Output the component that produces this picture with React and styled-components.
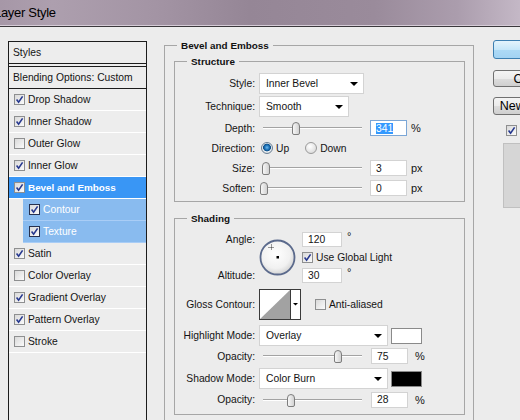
import React from "react";
import styled, { createGlobalStyle } from "styled-components";

const GlobalStyle = createGlobalStyle`
  html, body {
    margin: 0;
    padding: 0;
    background: #ececec;
  }
  body {
    font-family: "Liberation Sans", Arial, sans-serif;
    font-size: 10.3px;
    color: #141414;
  }
  * {
    box-sizing: border-box;
  }
`;

const Window = styled.div`
  width: 520px;
  height: 420px;
  overflow: hidden;
  background: #ececec;
  display: flex;
  flex-direction: column;
`;

const TitleBar = styled.div`
  height: 27px;
  flex-shrink: 0;
  display: flex;
  align-items: center;
  padding-bottom: 2px;
  background: linear-gradient(
    90deg,
    #a697a7 0%,
    #ad9fae 10%,
    #a394a4 30%,
    #958696 48%,
    #9a8b9b 72%,
    #ab9dad 88%,
    #c4b8c6 100%
  );
  border-bottom: 1px solid #3b383c;
  box-shadow: inset 0 -1px 0 #d6ccd7;
`;

const Title = styled.span`
  font-size: 13px;
  letter-spacing: -0.3px;
  margin-left: -6px;
  color: #000;
`;

const Body = styled.div`
  display: flex;
  height: 393px;
  align-items: flex-start;
  overflow: hidden;
`;

/* ---------- left list of styles ---------- */

const StylesPanel = styled.div`
  flex-shrink: 0;
  align-self: stretch;
  width: 139px;
  margin: 14px 0 0 8px;
  border: 1px solid #1c1c1c;
  border-bottom: none;
  background: #ededed;
`;

const PanelHeader = styled.div`
  height: ${({ $double }) => ($double ? 25 : 22)}px;
  padding-left: 4px;
  display: flex;
  align-items: center;
  border-bottom: ${({ $double }) => ($double ? "4px double #1c1c1c" : "1px solid #1c1c1c")};
`;

const PanelItem = styled.div`
  height: 22px;
  display: flex;
  align-items: center;
  gap: 3px;
  margin-left: ${({ $sub }) => ($sub ? 14 : 0)}px;
  padding-left: ${({ $sub }) => ($sub ? 6 : 5)}px;
  border-bottom: 1px solid ${({ $sub }) => ($sub ? "#a9cdf6" : "#ffffff")};
  background: ${({ $sel, $sub }) => ($sel ? "#3996f5" : $sub ? "#89bbef" : "transparent")};
  color: ${({ $sel, $sub }) => ($sel || $sub ? "#fff" : "#141414")};
  font-weight: ${({ $sel }) => ($sel ? "bold" : "normal")};
  font-size: ${({ $sel }) => ($sel ? "9.9px" : "10.3px")};
`;

const Box = styled.span`
  width: 11px;
  height: 11px;
  flex-shrink: 0;
  border: 1px solid ${({ $dark }) => ($dark ? "#27314f" : "#8e8f90")};
  background: linear-gradient(135deg, #d9d9d9, #fbfbfb);
  display: inline-flex;
  align-items: center;
  justify-content: center;
  margin-left: ${({ $ml }) => $ml || 0}px;
`;

const CheckBox = ({ on, dark, ml }) => (
  <Box $dark={dark} $ml={ml}>
    {on && (
      <svg width="9" height="9" viewBox="0 0 9 9">
        <path d="M1.6 4.6 L3.6 7.2 L7.6 1.4" fill="none" stroke="#26388f" strokeWidth="1.6" />
      </svg>
    )}
  </Box>
);

/* ---------- centre settings ---------- */

const Group = styled.fieldset`
  flex-shrink: 0;
  width: 310px;
  margin: 12px 0 0 17px;
  padding: 3px 8px 40px 9px;
  border: 1px solid #a6a6a6;
  min-width: 0;
`;

const SubGroup = styled.fieldset`
  width: 291px;
  margin: ${({ $mt }) => $mt || 0}px 0 0 0;
  padding: ${({ $pt }) => $pt}px 0 4px 0;
  border: 1px solid #a6a6a6;
  min-width: 0;
`;

const Legend = styled.legend`
  font-weight: bold;
  font-size: 9.9px;
  line-height: 13px;
  padding: 0 4px;
  margin-left: ${({ $ml }) => $ml}px;
  color: #111;
`;

const Row = styled.div`
  display: flex;
  align-items: center;
  height: ${({ $h }) => $h}px;
  margin-top: ${({ $mt }) => $mt || 0}px;
`;

const Label = styled.span`
  width: 84px;
  padding-right: 4px;
  text-align: right;
  flex-shrink: 0;
`;

const Select = styled.div`
  width: ${({ $w }) => $w}px;
  height: 21px;
  flex-shrink: 0;
  background: #fff;
  border: 1px solid #d3d3d3;
  display: flex;
  align-items: center;
  justify-content: space-between;
  padding: 0 5px 0 6px;
`;

const Caret = ({ w = 8 }) => (
  <svg width={w} height={w / 2} viewBox={`0 0 ${w} ${w / 2}`}>
    <path d={`M0 0 H${w} L${w / 2} ${w / 2} Z`} fill="#000" />
  </svg>
);

const Slider = styled.div`
  position: relative;
  width: 99px;
  height: 14px;
  margin-left: 4px;
  flex-shrink: 0;
  display: flex;
  align-items: center;
`;

const Track = styled.div`
  width: 100%;
  height: 2px;
  border-top: 1px solid #a3a3a3;
  border-bottom: 1px solid #fff;
`;

const Thumb = styled.span`
  position: absolute;
  top: 1px;
  left: ${({ $at }) => $at}px;
  width: 8px;
  height: 13px;
  border: 1px solid #7d7d7d;
  border-radius: 4px 4px 2px 2px;
  background: linear-gradient(90deg, #f7f7f7, #d2d2d2);
`;

const NumBox = styled.div`
  width: ${({ $w }) => $w || 37}px;
  height: ${({ $h }) => $h || 16}px;
  margin-left: ${({ $ml }) => ($ml === undefined ? 8 : $ml)}px;
  flex-shrink: 0;
  background: #fff;
  border: 1px solid ${({ $focus }) => ($focus ? "#7ba6d6" : "#d3d3d3")};
  padding-left: 5px;
  display: flex;
  align-items: center;
`;

const Selected = styled.span`
  background: #3399ff;
  color: #fff;
`;

const Unit = styled.span`
  margin-left: ${({ $ml }) => $ml || 4}px;
  font-size: 11px;
`;

const Degree = styled.span`
  margin-left: 5px;
  align-self: flex-start;
  line-height: 9px;
  font-size: 11px;
`;

const Radio = styled.span`
  width: 12px;
  height: 12px;
  flex-shrink: 0;
  border-radius: 50%;
  margin-left: ${({ $ml }) => $ml}px;
  border: 1px solid ${({ $on }) => ($on ? "#6b7f93" : "#9a9a9a")};
  background: ${({ $on }) =>
    $on
      ? "radial-gradient(circle at 50% 45%, #6dbbf0 0, #1b6fb5 2.4px, #0d4e86 3.6px, #eef2f5 4.2px, #cdd4da 6px)"
      : "radial-gradient(circle at 40% 35%, #ffffff, #d2d2d2)"};
`;

const Text = styled.span`
  margin-left: ${({ $ml }) => $ml || 3}px;
  white-space: nowrap;
`;

const AngleGrid = styled.div`
  display: grid;
  grid-template-columns: 84px 43px auto;
  grid-template-rows: 15px 21px 15px;
  align-items: center;
`;

const Dial = styled.svg`
  grid-column: 2;
  grid-row: 1 / span 3;
  align-self: center;
`;

const Cell = styled.div`
  grid-column: ${({ $col }) => $col};
  grid-row: ${({ $row }) => $row};
  display: flex;
  align-items: center;
  height: 100%;
`;

const ContourBox = styled.div`
  width: 42px;
  height: 31px;
  flex-shrink: 0;
  display: flex;
  background: #fff;
  border: 1px solid #3a3a3a;
`;

const ContourDrop = styled.div`
  flex: 1;
  border-left: 1px solid #3a3a3a;
  display: flex;
  align-items: center;
  justify-content: center;
`;

const Swatch = styled.div`
  width: 31px;
  height: 16px;
  margin-left: 3px;
  flex-shrink: 0;
  background: ${({ $color }) => $color};
  border: 1px solid #8a8a8a;
`;

/* ---------- right column ---------- */

const Side = styled.div`
  flex-shrink: 0;
  width: 80px;
  margin-left: 19px;
  display: flex;
  flex-direction: column;
`;

const SideButton = styled.div`
  height: ${({ $h }) => $h}px;
  margin-top: ${({ $mt }) => $mt}px;
  border-radius: 3px;
  border: 1px solid ${({ $primary }) => ($primary ? "#3c7fb1" : "#707070")};
  background: ${({ $primary }) =>
    $primary
      ? "linear-gradient(#e4f4fc, #c6e7f9 50%, #addaf6 51%, #a2d3f3)"
      : "linear-gradient(#f4f4f4, #ebebeb 50%, #dddddd 51%, #cfcfcf)"};
  font-size: 12.5px;
  color: #000;
  display: flex;
  align-items: center;
  justify-content: center;
  white-space: nowrap;
`;

const PreviewRow = styled.div`
  display: flex;
  align-items: center;
  margin-top: 10px;
  height: 11px;
`;

const PreviewBox = styled.div`
  height: 65px;
  margin: 7px 0 0 10px;
  background: #d6d6d6;
  border: 1px solid #c0c0c0;
`;

const items = [
  { name: "Drop Shadow", on: true },
  { name: "Inner Shadow", on: true },
  { name: "Outer Glow", on: false },
  { name: "Inner Glow", on: true },
  { name: "Bevel and Emboss", on: true, sel: true },
  { name: "Contour", on: true, sub: true },
  { name: "Texture", on: true, sub: true },
  { name: "Satin", on: true },
  { name: "Color Overlay", on: false },
  { name: "Gradient Overlay", on: true },
  { name: "Pattern Overlay", on: true },
  { name: "Stroke", on: false },
];

const SliderField = ({ at }) => (
  <Slider>
    <Track />
    <Thumb $at={at} />
  </Slider>
);

export default function App() {
  return (
    <>
      <GlobalStyle />
      <Window>
        <TitleBar>
          <Title>Layer Style</Title>
        </TitleBar>
        <Body>
          <StylesPanel>
            <PanelHeader $double>Styles</PanelHeader>
            <PanelHeader>Blending Options: Custom</PanelHeader>
            {items.map((it) => (
              <PanelItem key={it.name} $sel={it.sel} $sub={it.sub}>
                <CheckBox on={it.on} dark={it.sub} />
                {it.name}
              </PanelItem>
            ))}
          </StylesPanel>

          <Group>
            <Legend $ml={3}>Bevel and Emboss</Legend>

            <SubGroup $pt={5}>
              <Legend $ml={12}>Structure</Legend>
              <Row $h={21}>
                <Label>Style:</Label>
                <Select $w={105}>
                  Inner Bevel
                  <Caret />
                </Select>
              </Row>
              <Row $h={21} $mt={2}>
                <Label>Technique:</Label>
                <Select $w={90}>
                  Smooth
                  <Caret />
                </Select>
              </Row>
              <Row $h={18} $mt={2}>
                <Label>Depth:</Label>
                <SliderField at={29} />
                <NumBox $focus>
                  <Selected>341</Selected>
                </NumBox>
                <Unit>%</Unit>
              </Row>
              <Row $h={22}>
                <Label>Direction:</Label>
                <Radio $on $ml={2} />
                <Text>Up</Text>
                <Radio $ml={16} />
                <Text>Down</Text>
              </Row>
              <Row $h={18}>
                <Label>Size:</Label>
                <SliderField at={-1} />
                <NumBox>3</NumBox>
                <Unit>px</Unit>
              </Row>
              <Row $h={18} $mt={2}>
                <Label>Soften:</Label>
                <SliderField at={-3} />
                <NumBox>0</NumBox>
                <Unit>px</Unit>
              </Row>
            </SubGroup>

            <SubGroup $mt={10} $pt={7}>
              <Legend $ml={12}>Shading</Legend>
              <AngleGrid>
                <Cell $col={1} $row={1}>
                  <Label>Angle:</Label>
                </Cell>
                <Dial width="37" height="37" viewBox="0 0 37 37">
                  <defs>
                    <radialGradient id="dialFill" cx="45%" cy="40%" r="60%">
                      <stop offset="0" stopColor="#ffffff" />
                      <stop offset="0.7" stopColor="#f1f1f1" />
                      <stop offset="1" stopColor="#d4d4d4" />
                    </radialGradient>
                  </defs>
                  <circle cx="18.5" cy="18.5" r="17" fill="url(#dialFill)" stroke="#5b6a8c" strokeWidth="1.8" />
                  <path d="M12.5 5.5 V11.5 M9.5 8.5 H15.5" stroke="#222" strokeWidth="0.9" strokeDasharray="1 1" />
                  <rect x="17.5" y="17" width="2.5" height="2.5" fill="#000" />
                </Dial>
                <Cell $col={3} $row={1}>
                  <NumBox $w={40} $h={15} $ml={0}>120</NumBox>
                  <Degree>°</Degree>
                </Cell>
                <Cell $col={3} $row={2}>
                  <CheckBox on />
                  <Text>Use Global Light</Text>
                </Cell>
                <Cell $col={1} $row={3}>
                  <Label>Altitude:</Label>
                </Cell>
                <Cell $col={3} $row={3}>
                  <NumBox $w={40} $h={15} $ml={0}>30</NumBox>
                  <Degree>°</Degree>
                </Cell>
              </AngleGrid>

              <Row $h={31} $mt={6}>
                <Label>Gloss Contour:</Label>
                <ContourBox>
                  <svg width="30" height="29" viewBox="0 0 30 29">
                    <polygon points="0,29 30,0 30,29" fill="#a2a2a2" />
                  </svg>
                  <ContourDrop>
                    <Caret w={5} />
                  </ContourDrop>
                </ContourBox>
                <CheckBox ml={14} />
                <Text>Anti-aliased</Text>
              </Row>

              <Row $h={21} $mt={5}>
                <Label>Highlight Mode:</Label>
                <Select $w={129}>
                  Overlay
                  <Caret />
                </Select>
                <Swatch $color="#ffffff" />
              </Row>
              <Row $h={20}>
                <Label>Opacity:</Label>
                <SliderField at={71} />
                <NumBox $ml={9}>75</NumBox>
                <Unit $ml={7}>%</Unit>
              </Row>
              <Row $h={21} $mt={2}>
                <Label>Shadow Mode:</Label>
                <Select $w={129}>
                  Color Burn
                  <Caret />
                </Select>
                <Swatch $color="#000000" />
              </Row>
              <Row $h={21}>
                <Label>Opacity:</Label>
                <SliderField at={24} />
                <NumBox $ml={9}>28</NumBox>
                <Unit $ml={7}>%</Unit>
              </Row>
            </SubGroup>
          </Group>

          <Side>
            <SideButton $primary $h={19} $mt={13}>OK</SideButton>
            <SideButton $h={17} $mt={11}>Cancel</SideButton>
            <SideButton $h={18} $mt={10}>New Style...</SideButton>
            <PreviewRow>
              <CheckBox on ml={13} />
              <Text>Preview</Text>
            </PreviewRow>
            <PreviewBox />
          </Side>
        </Body>
      </Window>
    </>
  );
}
